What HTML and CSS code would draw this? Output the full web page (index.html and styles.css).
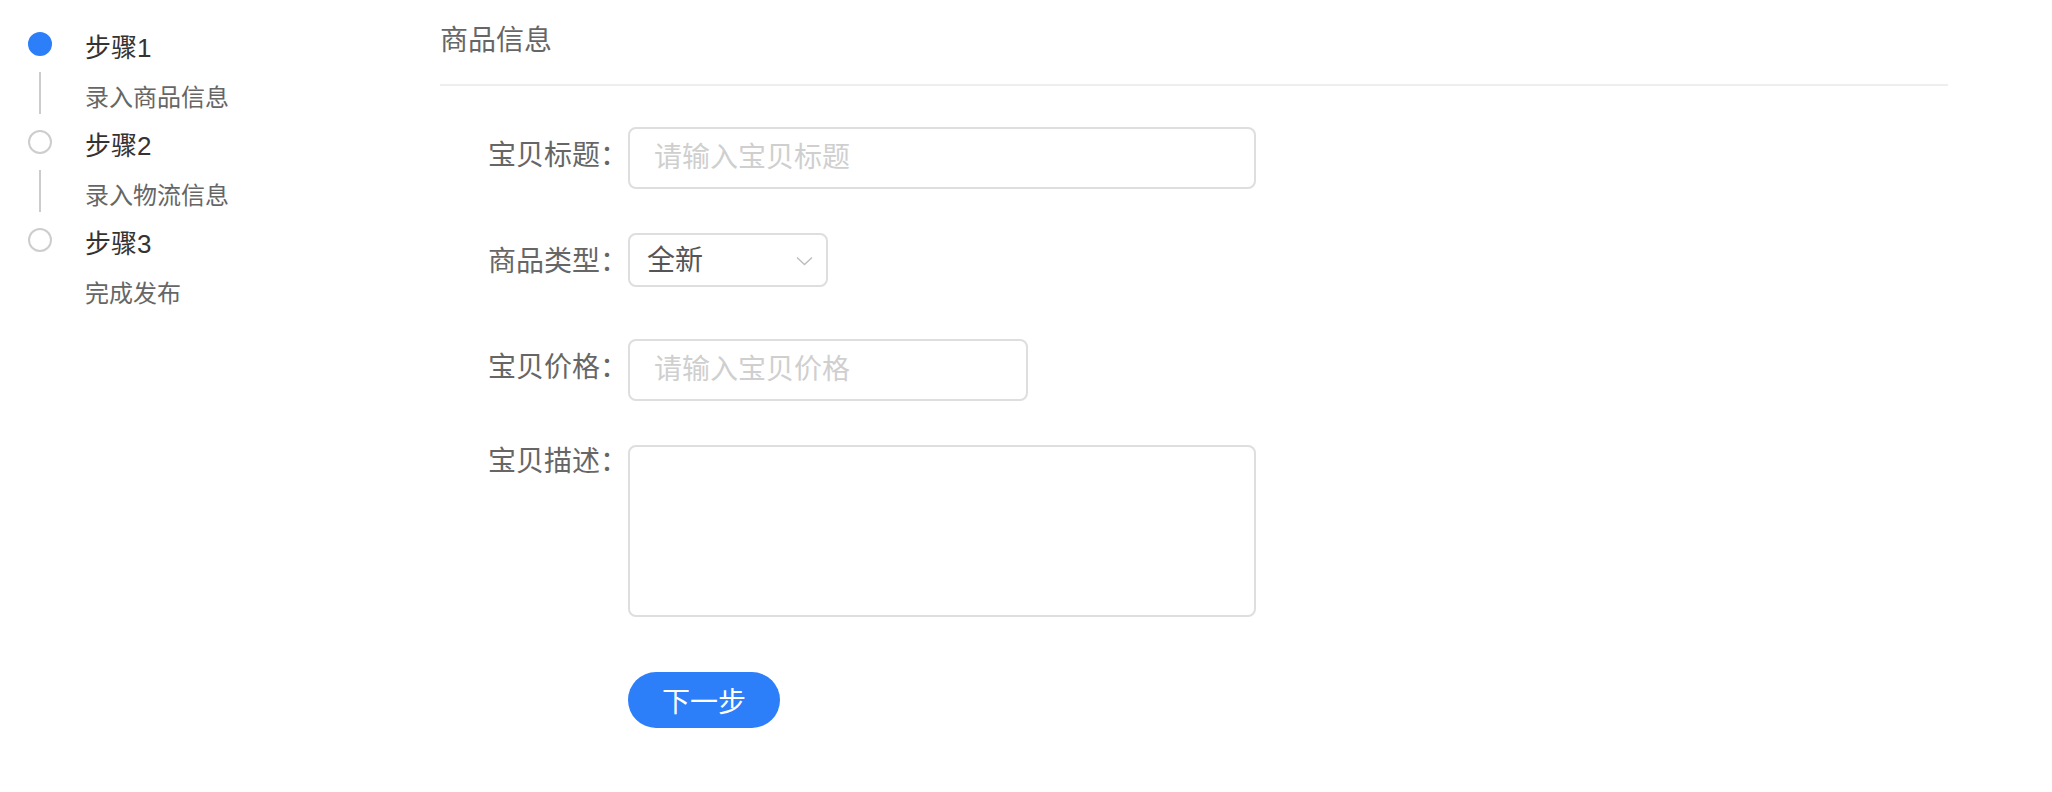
FILE: index.html
```html
<!DOCTYPE html>
<html lang="zh-CN">
<head>
<meta charset="utf-8">
<title>发布宝贝</title>
<link rel="stylesheet" href="styles.css">
</head>
<body>
<div class="page">
  <aside class="steps">
    <div class="step is-active">
      <div class="step-rail"><span class="step-dot"></span><span class="step-line"></span></div>
      <div class="step-body">
        <div class="step-title">步骤1</div>
        <div class="step-desc">录入商品信息</div>
      </div>
    </div>
    <div class="step">
      <div class="step-rail"><span class="step-dot"></span><span class="step-line"></span></div>
      <div class="step-body">
        <div class="step-title">步骤2</div>
        <div class="step-desc">录入物流信息</div>
      </div>
    </div>
    <div class="step">
      <div class="step-rail"><span class="step-dot"></span></div>
      <div class="step-body">
        <div class="step-title">步骤3</div>
        <div class="step-desc">完成发布</div>
      </div>
    </div>
  </aside>

  <main class="content">
    <h2 class="section-title">商品信息</h2>
    <form class="form">
      <div class="form-row">
        <label class="form-label" for="title">宝贝标题：</label>
        <input class="text-input text-input--wide" id="title" type="text" placeholder="请输入宝贝标题">
      </div>
      <div class="form-row">
        <label class="form-label">商品类型：</label>
        <div class="select">
          <span class="select-value">全新</span>
          <svg class="select-arrow" width="17" height="10" viewBox="0 0 17 10"><polyline points="1,1.5 8.5,8.5 16,1.5" fill="none" stroke="#bdbdbd" stroke-width="1.4"/></svg>
        </div>
      </div>
      <div class="form-row">
        <label class="form-label" for="price">宝贝价格：</label>
        <input class="text-input text-input--narrow" id="price" type="text" placeholder="请输入宝贝价格">
      </div>
      <div class="form-row">
        <label class="form-label form-label--top" for="desc">宝贝描述：</label>
        <textarea class="textarea" id="desc"></textarea>
      </div>
      <div class="form-actions">
        <button class="btn-primary" type="button">下一步</button>
      </div>
    </form>
  </main>
</div>
</body>
</html>
```

FILE: styles.css
```css
* {
  box-sizing: border-box;
}

html, body {
  margin: 0;
  padding: 0;
  background: #ffffff;
}

body {
  font-family: "Liberation Sans", "Noto Sans CJK SC", sans-serif;
  color: #333333;
}

.page {
  display: flex;
  width: 2052px;
  min-height: 792px;
}

/* ---------- steps ---------- */
.steps {
  flex: 0 0 440px;
  padding: 24px 0 0 28px;
}

.step {
  display: flex;
  gap: 33px;
  height: 98px;
}

.step-rail {
  flex: 0 0 24px;
  display: flex;
  flex-direction: column;
  align-items: center;
}

.step-dot {
  display: block;
  width: 24px;
  height: 24px;
  margin-top: 8px;
  border-radius: 50%;
  border: 2px solid #cdcdcd;
  background: #ffffff;
}

.step.is-active .step-dot {
  border-color: #2c7ef9;
  background: #2c7ef9;
}

.step-line {
  display: block;
  width: 2px;
  height: 42px;
  margin-top: 16px;
  background: #cccccc;
}

.step-body {
  display: flex;
  flex-direction: column;
}

.step-title {
  font-size: 26px;
  line-height: 49px;
  color: #333333;
}

.step-desc {
  font-size: 24px;
  line-height: 49px;
  color: #666666;
}

/* ---------- content ---------- */
.content {
  flex: 0 0 1508px;
  padding-top: 16px;
}

.section-title {
  margin: 0;
  font-size: 28px;
  font-weight: normal;
  line-height: 50px;
  color: #666666;
  padding-bottom: 18px;
  border-bottom: 2px solid #eeeeee;
}

.form {
  margin: 41px 0 0 0;
}

.form-row {
  display: flex;
  align-items: flex-start;
  min-height: 62px;
  margin-bottom: 44px;
}

.form-label {
  flex: 0 0 188px;
  text-align: right;
  font-size: 28px;
  line-height: 58px;
  color: #666666;
}

.form-label--top {
  line-height: 34px;
}

.text-input {
  height: 62px;
  padding: 0 24px;
  border: 2px solid #dedede;
  border-radius: 8px;
  font-family: inherit;
  font-size: 28px;
  color: #333333;
  background: #ffffff;
  outline: none;
}

.text-input::placeholder {
  color: #cfcfcf;
}

.text-input--wide {
  width: 628px;
}

.text-input--narrow {
  width: 400px;
}

.select {
  display: flex;
  align-items: center;
  justify-content: space-between;
  width: 200px;
  height: 54px;
  padding: 0 13px 0 17px;
  border: 2px solid #dedede;
  border-radius: 8px;
  background: #ffffff;
}

.select-value {
  font-size: 28px;
  color: #555555;
  line-height: 1;
  margin-top: 2px;
}

.select-arrow {
  display: block;
  margin-top: 2px;
}

.textarea {
  width: 628px;
  height: 172px;
  padding: 12px 24px;
  border: 2px solid #dedede;
  border-radius: 8px;
  font-family: inherit;
  font-size: 28px;
  resize: none;
  outline: none;
  background: #ffffff;
}

.form-row:last-of-type {
  margin-bottom: 0;
}

.form-actions {
  margin-top: 55px;
  padding-left: 188px;
}

.btn-primary {
  display: flex;
  align-items: center;
  justify-content: center;
  width: 152px;
  height: 56px;
  padding: 0;
  border: none;
  border-radius: 28px;
  background: #2c7ef9;
  color: #ffffff;
  font-family: inherit;
  font-size: 28px;
  cursor: pointer;
}
```
